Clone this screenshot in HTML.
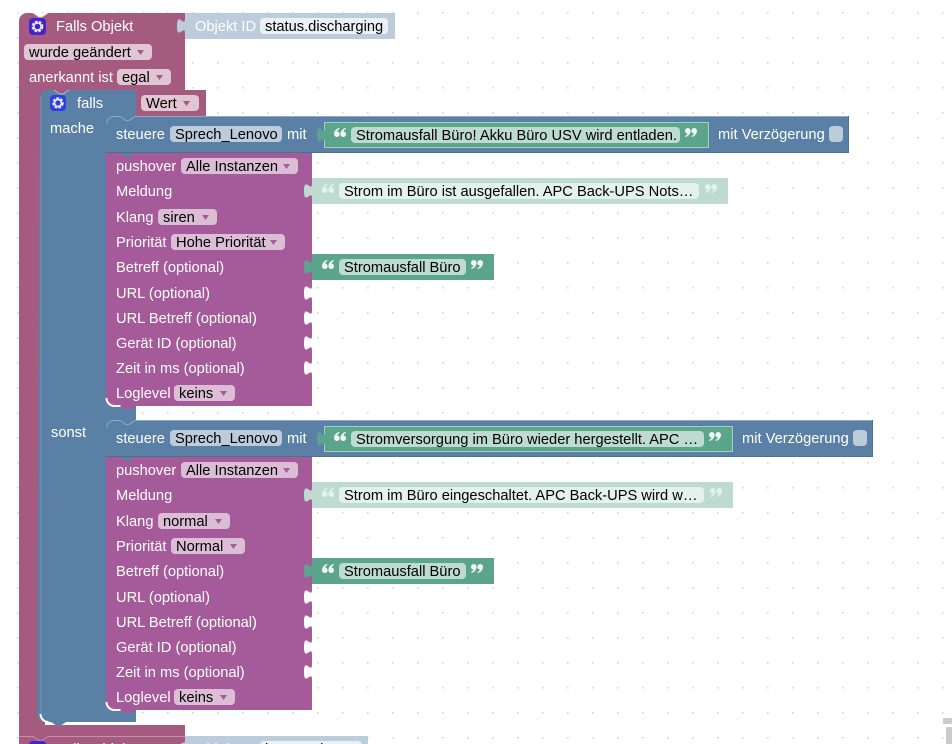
<!DOCTYPE html>
<html><head><meta charset="utf-8">
<style>
html,body{margin:0;padding:0;background:#fff;width:952px;height:744px;overflow:hidden}
svg{display:block}
text{font-family:"Liberation Sans",Arial,sans-serif;font-size:14.67px;fill:#fff}
text.d{fill:#000}
.pk{fill:#e0c5d3}
.bl{fill:#bdccdb}
.pu{fill:#dbbdd6}
.lt{fill:#ebf0f5}
.gp{fill:#bddbd1}
.gl{fill:#e5f1ed}
.qd{fill:#f2f8f6}
.ql{fill:#e5f1ed}
</style></head><body>
<svg width="952" height="744" viewBox="0 0 952 744" xmlns="http://www.w3.org/2000/svg">
<defs>
<pattern id="g" x="17" y="12" width="25" height="25" patternUnits="userSpaceOnUse"><rect x="0" y="0" width="1.6" height="1.6" fill="#d4d4d4"/></pattern>
</defs>
<rect width="952" height="744" fill="#fff"/>
<rect width="952" height="744" fill="url(#g)"/>

<!-- main hat block -->
<path d="M19,21 a8,8 0 0 1 8,-8 h6 l6,4 h3 l6,-4 h137 v77 h-145 v635 h145 v11 h-166 z" fill="#a55b80"/>
<path d="M33,13 l6,4 h3 l6,-4" fill="none" stroke="#e4cbd7" stroke-width="1"/>
<rect x="40" y="85" width="32" height="11" fill="#a55b80"/>
<rect x="40" y="714" width="5" height="12" fill="#a55b80"/>
<!-- Object ID shadow -->
<rect x="185" y="13" width="210" height="26" fill="#bdccdb"/>
<path d="M185,18.5 c0,10 -8,-8 -8,7.5 s8,-2.5 8,7.5 z" fill="#bdccdb"/>
<rect x="260" y="18" width="128" height="16" rx="4" class="lt"/>
<text x="195" y="31">Objekt ID</text>
<text x="265" y="31" class="d">status.discharging</text>
<rect x="29" y="18" width="17" height="17" rx="4" fill="#4422cc"/>
<circle cx="37.5" cy="26.5" r="4.6" fill="none" stroke="#e8e6f8" stroke-width="2.6" stroke-dasharray="2.6 1.2"/>
<circle cx="37.5" cy="26.5" r="3.6" fill="none" stroke="#e8e6f8" stroke-width="1.6"/>
<text x="56" y="31">Falls Objekt</text>
<rect x="24" y="44" width="128" height="16" rx="4" class="pk"/>
<text x="29" y="57" class="d">wurde geändert</text>
<path d="M137,50 h7 l-3.5,5 z" fill="#a55b80"/>
<text x="29" y="82">anerkannt ist</text>
<rect x="117" y="69" width="54" height="16" rx="4" class="pk"/>
<text x="122" y="82" class="d">egal</text>
<path d="M156,75 h7 l-3.5,5 z" fill="#a55b80"/>

<!-- Wert block -->
<rect x="136" y="90" width="70" height="26" fill="#a55b80"/>
<path d="M136,95.5 c0,10 -8,-8 -8,7.5 s8,-2.5 8,7.5 z" fill="#a55b80"/>
<rect x="141" y="95" width="58" height="16" rx="4" class="pk"/>
<text x="146" y="108" class="d">Wert</text>
<path d="M183,101 h7 l-3.5,5 z" fill="#a55b80"/>

<!-- blue falls block -->
<path d="M40,98 a8,8 0 0 1 8,-8 h6 l6,4 h3 l6,-4 h67 v26 h-30 v290 h30 v14 h-30 v290 h30 v12 h-70 l-6,4 h-3 l-6,-4 h-6 a8,8 0 0 1 -8,-8 z" fill="#5b80a5"/>
<path d="M106,110 h30 v20 h-30 z M106,396 h30 v30 h-30 z M106,700 h30 v12 h-30 z" fill="#5b80a5"/>
<path d="M54,90 l6,4 h3 l6,-4" fill="none" stroke="#a9bfd3" stroke-width="1"/>
<path d="M41,98 v616" fill="none" stroke="#7594b3" stroke-width="1"/>
<path d="M40.5,714 a8,8 0 0 0 8,8" fill="none" stroke="#fff" stroke-width="2"/>
<rect x="50" y="95" width="16" height="16" rx="4" fill="#2e3fe0"/>
<circle cx="58" cy="103" r="4.4" fill="none" stroke="#e8e8fa" stroke-width="2.6" stroke-dasharray="2.6 1.2"/>
<circle cx="58" cy="103" r="3.4" fill="none" stroke="#e8e8fa" stroke-width="1.6"/>
<text x="77" y="108">falls</text>
<text x="50" y="133">mache</text>
<text x="51" y="437">sonst</text>

<!-- steuere 1 -->
<path d="M106,124 a8,8 0 0 1 8,-8 h6 l6,4 h3 l6,-4 h714 v37 h-743 z" fill="#5b80a5"/>
<path d="M106.5,124 a7.5,7.5 0 0 1 7.5,-7.5 h6 l6,4 h3 l6,-4 h714" fill="none" stroke="#8fa9c3" stroke-width="1"/>
<path d="M848.5,116 v36.5 h-742" fill="none" stroke="#4f6f8f" stroke-width="1"/>
<text x="116" y="139">steuere</text>
<rect x="170" y="126" width="112" height="16" rx="4" class="bl"/>
<text x="175" y="139" class="d">Sprech_Lenovo</text>
<text x="287" y="139">mit</text>
<rect x="324.5" y="122.5" width="384" height="25" fill="#5ba58c" stroke="#a5d0c1" stroke-width="1"/>
<path d="M325,127.5 c0,10 -8,-8 -8,7.5 s8,-2.5 8,7.5 z" fill="#5ba58c"/>
<path class="qd" transform="translate(334,128)" d="M5,0C2,.8 0,3.4 0,6.2A2.8,2.8 0 1 0 2.9,3.4C3.2,2.6 4.2,1.6 5.6,1zM11.4,0C8.4,.8 6.4,3.4 6.4,6.2A2.8,2.8 0 1 0 9.3,3.4C9.6,2.6 10.6,1.6 12,1z"/>
<rect x="351" y="127" width="329" height="16" rx="4" class="gp"/>
<text x="356" y="140" class="d">Stromausfall Büro! Akku Büro USV wird entladen.</text>
<path class="qd" transform="translate(697,137) rotate(180)" d="M5,0C2,.8 0,3.4 0,6.2A2.8,2.8 0 1 0 2.9,3.4C3.2,2.6 4.2,1.6 5.6,1zM11.4,0C8.4,.8 6.4,3.4 6.4,6.2A2.8,2.8 0 1 0 9.3,3.4C9.6,2.6 10.6,1.6 12,1z"/>
<text x="718" y="139">mit Verzögerung</text>
<rect x="829" y="126" width="14" height="16" rx="4" class="bl"/>

<!-- pushover 1 -->
<path d="M106,153 h206 v253 h-177 l-6,4 h-3 l-6,-4 h-6 a8,8 0 0 1 -8,-8 z" fill="#a55b99"/>
<path d="M120,153 l6,4 h3 l6,-4 z" fill="#5b80a5"/>
<path d="M106.5,398 a8,8 0 0 0 8,8 h6" fill="none" stroke="#fff" stroke-width="2"/>
<text x="116" y="171">pushover</text>
<rect x="181" y="158" width="117" height="16" rx="4" class="pu"/>
<text x="186" y="171" class="d">Alle Instanzen</text>
<path d="M283,164 h7 l-3.5,5 z" fill="#a55b99"/>
<text x="116" y="196">Meldung</text>
<text x="116" y="222">Klang</text>
<rect x="158" y="209" width="59" height="16" rx="4" class="pu"/>
<text x="163" y="222" class="d">siren</text>
<path d="M202,215 h7 l-3.5,5 z" fill="#a55b99"/>
<text x="116" y="247">Priorität</text>
<rect x="171" y="234" width="114" height="16" rx="4" class="pu"/>
<text x="176" y="247" class="d">Hohe Priorität</text>
<path d="M270,240 h7 l-3.5,5 z" fill="#a55b99"/>
<text x="116" y="272">Betreff (optional)</text>
<text x="116" y="298">URL (optional)</text>
<text x="116" y="323">URL Betreff (optional)</text>
<text x="116" y="348">Gerät ID (optional)</text>
<text x="116" y="373">Zeit in ms (optional)</text>
<text x="116" y="398">Loglevel</text>
<rect x="174" y="385" width="61" height="16" rx="4" class="pu"/>
<text x="179" y="398" class="d">keins</text>
<path d="M220,391 h7 l-3.5,5 z" fill="#a55b99"/>
<path d="M312,285.5 c0,10 -8,-8 -8,7.5 s8,-2.5 8,7.5 z" fill="#fff"/>
<path d="M312,310.5 c0,10 -8,-8 -8,7.5 s8,-2.5 8,7.5 z" fill="#fff"/>
<path d="M312,335.5 c0,10 -8,-8 -8,7.5 s8,-2.5 8,7.5 z" fill="#fff"/>
<path d="M312,360.5 c0,10 -8,-8 -8,7.5 s8,-2.5 8,7.5 z" fill="#fff"/>

<!-- Meldung 1 -->
<path d="M312,178 h416 v26 h-416 z" fill="#bddbd1"/>
<path d="M312,183.5 c0,10 -8,-8 -8,7.5 s8,-2.5 8,7.5 z" fill="#bddbd1"/>
<path class="ql" transform="translate(322,184)" d="M5,0C2,.8 0,3.4 0,6.2A2.8,2.8 0 1 0 2.9,3.4C3.2,2.6 4.2,1.6 5.6,1zM11.4,0C8.4,.8 6.4,3.4 6.4,6.2A2.8,2.8 0 1 0 9.3,3.4C9.6,2.6 10.6,1.6 12,1z"/>
<rect x="339" y="183" width="360" height="16" rx="4" class="gl"/>
<text x="344" y="196" class="d">Strom im Büro ist ausgefallen. APC Back-UPS Nots…</text>
<path class="ql" transform="translate(717,193) rotate(180)" d="M5,0C2,.8 0,3.4 0,6.2A2.8,2.8 0 1 0 2.9,3.4C3.2,2.6 4.2,1.6 5.6,1zM11.4,0C8.4,.8 6.4,3.4 6.4,6.2A2.8,2.8 0 1 0 9.3,3.4C9.6,2.6 10.6,1.6 12,1z"/>
<!-- Betreff 1 -->
<path d="M312,254 h182 v26 h-182 z" fill="#5ba58c"/>
<path d="M312,259.5 c0,10 -8,-8 -8,7.5 s8,-2.5 8,7.5 z" fill="#5ba58c"/>
<path class="qd" transform="translate(322,260)" d="M5,0C2,.8 0,3.4 0,6.2A2.8,2.8 0 1 0 2.9,3.4C3.2,2.6 4.2,1.6 5.6,1zM11.4,0C8.4,.8 6.4,3.4 6.4,6.2A2.8,2.8 0 1 0 9.3,3.4C9.6,2.6 10.6,1.6 12,1z"/>
<rect x="339" y="259" width="127" height="16" rx="4" class="gp"/>
<text x="344" y="272" class="d">Stromausfall Büro</text>
<path class="qd" transform="translate(483,269) rotate(180)" d="M5,0C2,.8 0,3.4 0,6.2A2.8,2.8 0 1 0 2.9,3.4C3.2,2.6 4.2,1.6 5.6,1zM11.4,0C8.4,.8 6.4,3.4 6.4,6.2A2.8,2.8 0 1 0 9.3,3.4C9.6,2.6 10.6,1.6 12,1z"/>

<!-- steuere 2 -->
<path d="M106,428 a8,8 0 0 1 8,-8 h6 l6,4 h3 l6,-4 h738 v37 h-767 z" fill="#5b80a5"/>
<path d="M106.5,428 a7.5,7.5 0 0 1 7.5,-7.5 h6 l6,4 h3 l6,-4 h738" fill="none" stroke="#8fa9c3" stroke-width="1"/>
<path d="M872.5,420 v36.5 h-766" fill="none" stroke="#4f6f8f" stroke-width="1"/>
<text x="116" y="443">steuere</text>
<rect x="170" y="430" width="112" height="16" rx="4" class="bl"/>
<text x="175" y="443" class="d">Sprech_Lenovo</text>
<text x="287" y="443">mit</text>
<rect x="324.5" y="426.5" width="408" height="25" fill="#5ba58c" stroke="#a5d0c1" stroke-width="1"/>
<path d="M325,431.5 c0,10 -8,-8 -8,7.5 s8,-2.5 8,7.5 z" fill="#5ba58c"/>
<path class="qd" transform="translate(334,432)" d="M5,0C2,.8 0,3.4 0,6.2A2.8,2.8 0 1 0 2.9,3.4C3.2,2.6 4.2,1.6 5.6,1zM11.4,0C8.4,.8 6.4,3.4 6.4,6.2A2.8,2.8 0 1 0 9.3,3.4C9.6,2.6 10.6,1.6 12,1z"/>
<rect x="351" y="431" width="353" height="16" rx="4" class="gp"/>
<text x="356" y="444" class="d">Stromversorgung im Büro wieder hergestellt. APC …</text>
<path class="qd" transform="translate(721,441) rotate(180)" d="M5,0C2,.8 0,3.4 0,6.2A2.8,2.8 0 1 0 2.9,3.4C3.2,2.6 4.2,1.6 5.6,1zM11.4,0C8.4,.8 6.4,3.4 6.4,6.2A2.8,2.8 0 1 0 9.3,3.4C9.6,2.6 10.6,1.6 12,1z"/>
<text x="742" y="443">mit Verzögerung</text>
<rect x="853" y="430" width="14" height="16" rx="4" class="bl"/>

<!-- pushover 2 -->
<path d="M106,457 h206 v253 h-177 l-6,4 h-3 l-6,-4 h-6 a8,8 0 0 1 -8,-8 z" fill="#a55b99"/>
<path d="M120,457 l6,4 h3 l6,-4 z" fill="#5b80a5"/>
<path d="M106.5,702 a8,8 0 0 0 8,8 h6" fill="none" stroke="#fff" stroke-width="2"/>
<text x="116" y="475">pushover</text>
<rect x="181" y="462" width="117" height="16" rx="4" class="pu"/>
<text x="186" y="475" class="d">Alle Instanzen</text>
<path d="M283,468 h7 l-3.5,5 z" fill="#a55b99"/>
<text x="116" y="500">Meldung</text>
<text x="116" y="526">Klang</text>
<rect x="158" y="513" width="72" height="16" rx="4" class="pu"/>
<text x="163" y="526" class="d">normal</text>
<path d="M215,519 h7 l-3.5,5 z" fill="#a55b99"/>
<text x="116" y="551">Priorität</text>
<rect x="171" y="538" width="74" height="16" rx="4" class="pu"/>
<text x="176" y="551" class="d">Normal</text>
<path d="M230,544 h7 l-3.5,5 z" fill="#a55b99"/>
<text x="116" y="576">Betreff (optional)</text>
<text x="116" y="602">URL (optional)</text>
<text x="116" y="627">URL Betreff (optional)</text>
<text x="116" y="652">Gerät ID (optional)</text>
<text x="116" y="677">Zeit in ms (optional)</text>
<text x="116" y="702">Loglevel</text>
<rect x="174" y="689" width="61" height="16" rx="4" class="pu"/>
<text x="179" y="702" class="d">keins</text>
<path d="M220,695 h7 l-3.5,5 z" fill="#a55b99"/>
<path d="M312,589.5 c0,10 -8,-8 -8,7.5 s8,-2.5 8,7.5 z" fill="#fff"/>
<path d="M312,614.5 c0,10 -8,-8 -8,7.5 s8,-2.5 8,7.5 z" fill="#fff"/>
<path d="M312,639.5 c0,10 -8,-8 -8,7.5 s8,-2.5 8,7.5 z" fill="#fff"/>
<path d="M312,664.5 c0,10 -8,-8 -8,7.5 s8,-2.5 8,7.5 z" fill="#fff"/>

<!-- Meldung 2 -->
<path d="M312,482 h421 v26 h-421 z" fill="#bddbd1"/>
<path d="M312,487.5 c0,10 -8,-8 -8,7.5 s8,-2.5 8,7.5 z" fill="#bddbd1"/>
<path class="ql" transform="translate(322,488)" d="M5,0C2,.8 0,3.4 0,6.2A2.8,2.8 0 1 0 2.9,3.4C3.2,2.6 4.2,1.6 5.6,1zM11.4,0C8.4,.8 6.4,3.4 6.4,6.2A2.8,2.8 0 1 0 9.3,3.4C9.6,2.6 10.6,1.6 12,1z"/>
<rect x="339" y="487" width="365" height="16" rx="4" class="gl"/>
<text x="344" y="500" class="d">Strom im Büro eingeschaltet. APC Back-UPS wird w…</text>
<path class="ql" transform="translate(722,497) rotate(180)" d="M5,0C2,.8 0,3.4 0,6.2A2.8,2.8 0 1 0 2.9,3.4C3.2,2.6 4.2,1.6 5.6,1zM11.4,0C8.4,.8 6.4,3.4 6.4,6.2A2.8,2.8 0 1 0 9.3,3.4C9.6,2.6 10.6,1.6 12,1z"/>
<!-- Betreff 2 -->
<path d="M312,558 h182 v26 h-182 z" fill="#5ba58c"/>
<path d="M312,563.5 c0,10 -8,-8 -8,7.5 s8,-2.5 8,7.5 z" fill="#5ba58c"/>
<path class="qd" transform="translate(322,564)" d="M5,0C2,.8 0,3.4 0,6.2A2.8,2.8 0 1 0 2.9,3.4C3.2,2.6 4.2,1.6 5.6,1zM11.4,0C8.4,.8 6.4,3.4 6.4,6.2A2.8,2.8 0 1 0 9.3,3.4C9.6,2.6 10.6,1.6 12,1z"/>
<rect x="339" y="563" width="127" height="16" rx="4" class="gp"/>
<text x="344" y="576" class="d">Stromausfall Büro</text>
<path class="qd" transform="translate(483,573) rotate(180)" d="M5,0C2,.8 0,3.4 0,6.2A2.8,2.8 0 1 0 2.9,3.4C3.2,2.6 4.2,1.6 5.6,1zM11.4,0C8.4,.8 6.4,3.4 6.4,6.2A2.8,2.8 0 1 0 9.3,3.4C9.6,2.6 10.6,1.6 12,1z"/>

<!-- next hat block (cut off) -->
<path d="M19,736 h14 l6,4 h3 l6,-4 h137 v8 h-166 z" fill="#a55b80"/>
<rect x="33" y="735" width="15" height="5" fill="#a55b80"/>
<path d="M19,736.5 h14 l6,4 h3 l6,-4 h137" fill="none" stroke="#c58fa9" stroke-width="1"/>
<rect x="185" y="736" width="183" height="8" fill="#bdccdb"/>
<path d="M185,741.5 c0,2 -2,0 -4,2.5 h4 z" fill="#bdccdb"/>
<rect x="260" y="741" width="102" height="16" rx="4" class="lt"/>
<text x="195" y="754">Objekt ID</text>
<text x="265" y="754" class="d">battery.charge</text>
<rect x="29" y="741" width="17" height="17" rx="4" fill="#4422cc"/>
<text x="56" y="754">Falls Objekt</text>

<!-- scrollbar fragment -->
<rect x="943" y="718" width="9" height="6" fill="#cccccc"/>
<rect x="946" y="727" width="6" height="17" fill="#cccccc"/>
</svg>
</body></html>
